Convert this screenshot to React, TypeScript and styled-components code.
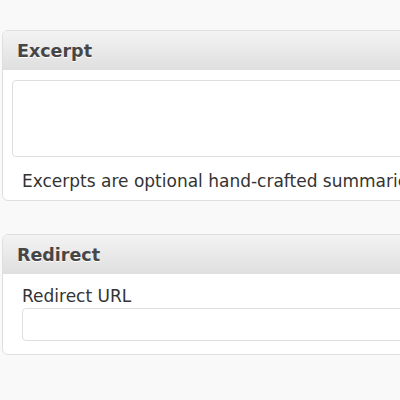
import React from "react";
import styled, { createGlobalStyle } from "styled-components";

const Global = createGlobalStyle`
  html, body { margin: 0; padding: 0; background: #f9f9f9; overflow: hidden; }
  body { font-family: "DejaVu Sans", Verdana, sans-serif; color: #333; }
`;

const Page = styled.div`
  display: flex;
  flex-direction: column;
  gap: 33px;
  padding: 30px 0 0 2px;
  width: 760px;
`;

const Panel = styled.section`
  background: #fff;
  border: 1px solid #dfdfdf;
  border-radius: 6px;
  overflow: hidden;
`;

const Header = styled.h3`
  margin: 0;
  height: 39px;
  display: flex;
  align-items: center;
  padding-left: 14px;
  padding-top: 1px;
  box-sizing: border-box;
  background: linear-gradient(to bottom, #f3f3f3, #dfdfdf);
  font-size: 17.5px;
  font-weight: bold;
  color: #464646;
  text-shadow: 0 1px 0 #fff;
`;

const Body = styled.div<{ $padX: number }>`
  padding: 10px ${(p) => p.$padX}px 8px;
  display: flex;
  flex-direction: column;
`;

const TextArea = styled.div`
  height: 75px;
  border: 1px solid #dfdfdf;
  border-radius: 4px;
  background: #fff;
`;

const Description = styled.p`
  margin: 13px 0 0 10px;
  font-size: 17px;
  line-height: 22px;
  white-space: nowrap;
`;

const Label = styled.label`
  font-size: 17px;
  line-height: 22px;
  margin-top: 1px;
`;

const Input = styled.div`
  margin-top: 1px;
  height: 31px;
  border: 1px solid #dfdfdf;
  border-radius: 4px;
  background: #fff;
  margin-bottom: 5px;
`;

export default function App() {
  return (
    <>
      <Global />
      <Page>
        <Panel>
          <Header>Excerpt</Header>
          <Body $padX={9}>
            <TextArea />
            <Description>
              Excerpts are optional hand-crafted summaries of your content that can be used in your theme.
            </Description>
          </Body>
        </Panel>
        <Panel>
          <Header>Redirect</Header>
          <Body $padX={19}>
            <Label>Redirect URL</Label>
            <Input />
          </Body>
        </Panel>
      </Page>
    </>
  );
}
